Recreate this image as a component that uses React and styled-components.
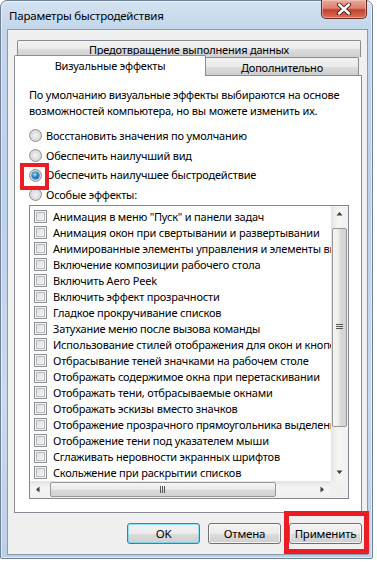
import React from "react";
import styled, { createGlobalStyle, css } from "styled-components";

const GlobalStyle = createGlobalStyle`
  html, body {
    margin: 0;
    padding: 0;
    background: #ffffff;
  }
  body {
    font-family: "Noto Sans", "DejaVu Sans", sans-serif;
    font-size: 11px;
    letter-spacing: -0.2px;
    color: #000;
  }
`;

const effects = [
  'Анимация в меню "Пуск" и панели задач',
  "Анимация окон при свертывании и развертывании",
  "Анимированные элементы управления и элементы внутри окна",
  "Включение композиции рабочего стола",
  "Включить Aero Peek",
  "Включить эффект прозрачности",
  "Гладкое прокручивание списков",
  "Затухание меню после вызова команды",
  "Использование стилей отображения для окон и кнопок",
  "Отбрасывание теней значками на рабочем столе",
  "Отображать содержимое окна при перетаскивании",
  "Отображать тени, отбрасываемые окнами",
  "Отображать эскизы вместо значков",
  "Отображение прозрачного прямоугольника выделения",
  "Отображение тени под указателем мыши",
  "Сглаживать неровности экранных шрифтов",
  "Скольжение при раскрытии списков",
];

const modes = [
  { label: "Восстановить значения по умолчанию", checked: false },
  { label: "Обеспечить наилучший вид", checked: false },
  { label: "Обеспечить наилучшее быстродействие", checked: true },
  { label: "Особые эффекты:", checked: false },
];

function Arrow({ dir }) {
  const shapes = {
    up: "M0.5 4.5 L3.5 1 L6.5 4.5 Z",
    down: "M0.5 1.5 L3.5 5 L6.5 1.5 Z",
    left: "M4.5 0.5 L1 3.5 L4.5 6.5 Z",
    right: "M1.5 0.5 L5 3.5 L1.5 6.5 Z",
  };
  return (
    <svg width="7" height="7" viewBox="0 0 7 7">
      <path d={shapes[dir]} fill="#3c3c3c" />
    </svg>
  );
}

function App() {
  return (
    <>
      <GlobalStyle />
      <Window>
        <TitleBar>
          <Title>Параметры быстродействия</Title>
          <CloseButton>
            <svg width="16" height="12" viewBox="0 0 16 12">
              <path
                d="M3 1.5 L13 10.5 M13 1.5 L3 10.5"
                stroke="#3b1510"
                strokeWidth="4.2"
                strokeLinecap="round"
              />
              <path
                d="M3 1.5 L13 10.5 M13 1.5 L3 10.5"
                stroke="#ffffff"
                strokeWidth="2.4"
                strokeLinecap="round"
              />
            </svg>
          </CloseButton>
        </TitleBar>

        <Client>
          <TabRow $first>
            <Tab $wide>Предотвращение выполнения данных</Tab>
          </TabRow>
          <TabRow>
            <Tab $active>Визуальные эффекты</Tab>
            <Tab>Дополнительно</Tab>
          </TabRow>

          <Panel>
            <Description>
              По умолчанию визуальные эффекты выбираются на основе
              <br />
              возможностей компьютера, но вы можете изменить их.
            </Description>

            <RadioGroup>
              {modes.map((m) => (
                <RadioRow key={m.label}>
                  <RadioMark $checked={m.checked} />
                  <span>{m.label}</span>
                </RadioRow>
              ))}
            </RadioGroup>

            <ListBox>
              <ListViewport>
                {effects.map((e) => (
                  <ListItem key={e}>
                    <CheckMark />
                    <span>{e}</span>
                  </ListItem>
                ))}
              </ListViewport>

              <VScroll>
                <ScrollArrow>
                  <Arrow dir="up" />
                </ScrollArrow>
                <VTrack>
                  <VThumb>
                    <svg width="7" height="6" viewBox="0 0 7 6">
                      <path d="M0 0.5 H7 M0 2.5 H7 M0 4.5 H7" stroke="#555" />
                    </svg>
                  </VThumb>
                </VTrack>
                <ScrollArrow>
                  <Arrow dir="down" />
                </ScrollArrow>
              </VScroll>

              <HScroll>
                <ScrollArrow>
                  <Arrow dir="left" />
                </ScrollArrow>
                <HTrack>
                  <HThumb>
                    <svg width="6" height="7" viewBox="0 0 6 7">
                      <path d="M0.5 0 V7 M2.5 0 V7 M4.5 0 V7" stroke="#555" />
                    </svg>
                  </HThumb>
                </HTrack>
                <ScrollArrow>
                  <Arrow dir="right" />
                </ScrollArrow>
              </HScroll>
              <Corner />
            </ListBox>
          </Panel>

          <ButtonRow>
            <Button $default>OK</Button>
            <Button>Отмена</Button>
            <Button>Применить</Button>
          </ButtonRow>
        </Client>

        <Highlight $left={19} $top={162} $w={29} $h={27} $t={4} />
        <Highlight $left={283} $top={510} $w={85} $h={43} $t={5} />
      </Window>
    </>
  );
}

const Window = styled.div`
  position: relative;
  box-sizing: border-box;
  width: 373px;
  height: 559px;
  padding: 0 4px 3px 6px;
  display: flex;
  flex-direction: column;
  border: 1px solid #6d8299;
  border-radius: 7px 7px 2px 2px;
  background: linear-gradient(
    to bottom,
    #d5e3f1 0px,
    #c3d6ea 28px,
    #bdd1e7 200px,
    #c9dbee 400px,
    #bccfe4 100%
  );
  box-shadow: inset 0 0 0 1px rgba(255, 255, 255, 0.55);
`;

const TitleBar = styled.div`
  height: 28px;
  display: flex;
  align-items: center;
  padding-left: 2px;
`;

const Title = styled.div`
  font-size: 11.5px;
  color: #000;
`;

const CloseButton = styled.div`
  margin-left: auto;
  align-self: flex-start;
  margin-top: -1px;
  margin-right: 1px;
  width: 46px;
  height: 19px;
  box-sizing: border-box;
  display: flex;
  align-items: center;
  justify-content: center;
  border: 1px solid #6a2a22;
  border-top: none;
  border-radius: 0 0 5px 5px;
  background: linear-gradient(
    to bottom,
    #e9a99c 0%,
    #d98272 45%,
    #c4412d 55%,
    #d4705c 100%
  );
  box-shadow: inset 0 0 0 1px rgba(255, 220, 210, 0.45);
`;

const Client = styled.div`
  flex: 1;
  box-sizing: border-box;
  display: flex;
  flex-direction: column;
  padding: 10px 0 0;
  background: #f0f0f0;
  border: 1px solid #8a9bb0;
`;

const TabRow = styled.div`
  display: flex;
  align-items: flex-end;
  margin: ${(p) => (p.$first ? "0 6px 0 9px" : "0 8px 0 6px")};
  position: relative;
  z-index: 1;
`;

const Tab = styled.div`
  box-sizing: border-box;
  display: flex;
  align-items: center;
  justify-content: center;
  white-space: nowrap;
  border: 1px solid #898c95;
  border-bottom: none;
  border-radius: 2px 2px 0 0;
  background: linear-gradient(to bottom, #f3f3f3 0%, #ebebeb 50%, #dddddd 51%, #cfcfcf 100%);
  height: 17px;
  ${(p) => (p.$wide ? "flex: 1;" : "")}
  ${(p) =>
    p.$active
      ? css`
          width: 192px;
          height: 21px;
          margin-top: -2px;
          margin-bottom: -1px;
          background: #ffffff;
          padding-bottom: 1px;
          position: relative;
          z-index: 2;
        `
      : ""}
  ${(p) =>
    !p.$active && !p.$wide
      ? css`
          flex: 1;
          height: 18px;
          padding-top: 2px;
          margin-left: -1px;
        `
      : ""}
`;

const Panel = styled.div`
  box-sizing: border-box;
  margin: 0 5px 0 6px;
  height: 438px;
  background: #ffffff;
  border: 1px solid #898c95;
  padding: 11px 0 0 14px;
  display: flex;
  flex-direction: column;
`;

const Description = styled.div`
  line-height: 16px;
  white-space: nowrap;
`;

const RadioGroup = styled.div`
  display: flex;
  flex-direction: column;
  margin-top: 7px;
`;

const RadioRow = styled.div`
  display: flex;
  align-items: center;
  gap: 4px;
  height: 19.7px;
  white-space: nowrap;
  span {
    line-height: 16px;
  }
`;

const RadioMark = styled.div`
  flex: none;
  box-sizing: border-box;
  width: 13px;
  height: 13px;
  border-radius: 50%;
  border: 1px solid #8e8f8f;
  background: radial-gradient(circle at 50% 50%, #f4f4f4 0%, #d6d6d6 70%, #e9e9e9 100%);
  display: flex;
  align-items: center;
  justify-content: center;
  &::after {
    content: "";
    width: 7px;
    height: 7px;
    border-radius: 50%;
    display: ${(p) => (p.$checked ? "block" : "none")};
    background: radial-gradient(circle at 40% 35%, #b9e4ff 0%, #2d8fd6 40%, #0b4a8d 100%);
    box-shadow: 0 0 0 0.5px #1b4f86;
  }
`;

const ListBox = styled.div`
  box-sizing: border-box;
  width: 320px;
  height: 294px;
  border: 1px solid #828790;
  display: grid;
  grid-template-columns: 1fr 17px;
  grid-template-rows: 275px 17px;
  background: #ffffff;
`;

const ListViewport = styled.div`
  overflow: hidden;
  padding: 3px 0 0 4px;
`;

const ListItem = styled.div`
  height: 16px;
  display: flex;
  align-items: center;
  gap: 6px;
  white-space: nowrap;
`;

const CheckMark = styled.div`
  flex: none;
  box-sizing: border-box;
  width: 13px;
  height: 13px;
  border: 1px solid #8e8f8f;
  background: linear-gradient(135deg, #dcdcdc 0%, #f2f2f2 70%, #fbfbfb 100%);
  box-shadow: inset 0 0 0 1px #f6f6f6, inset 0 0 0 2px #b6b9be;
`;

const VScroll = styled.div`
  display: flex;
  flex-direction: column;
  background: linear-gradient(to right, #e3e3e3, #f5f5f5 40%, #f0f0f0);
`;

const HScroll = styled.div`
  display: flex;
  background: linear-gradient(to bottom, #e3e3e3, #f5f5f5 40%, #f0f0f0);
`;

const ScrollArrow = styled.div`
  flex: none;
  width: 17px;
  height: 17px;
  display: flex;
  align-items: center;
  justify-content: center;
`;

const VTrack = styled.div`
  flex: 1;
  padding: 5px 1px 0;
`;

const VThumb = styled.div`
  box-sizing: border-box;
  height: 199px;
  border: 1px solid #979797;
  border-radius: 2px;
  background: linear-gradient(to right, #f6f6f6 0%, #ebebeb 45%, #dadada 55%, #d2d2d2 100%);
  display: flex;
  align-items: center;
  justify-content: center;
`;

const HTrack = styled.div`
  flex: 1;
  padding: 1px 0 1px 3px;
`;

const HThumb = styled.div`
  box-sizing: border-box;
  width: 226px;
  height: 100%;
  border: 1px solid #979797;
  border-radius: 2px;
  background: linear-gradient(to bottom, #f6f6f6 0%, #ebebeb 45%, #dadada 55%, #d2d2d2 100%);
  display: flex;
  align-items: center;
  justify-content: center;
`;

const Corner = styled.div`
  background: #f0f0f0;
`;

const ButtonRow = styled.div`
  display: flex;
  justify-content: flex-end;
  gap: 8px;
  padding: 10px 5px 0 0;
`;

const Button = styled.div`
  box-sizing: border-box;
  width: 73px;
  height: 21px;
  display: flex;
  align-items: center;
  justify-content: center;
  font-size: 11.5px;
  border: 1px solid ${(p) => (p.$default ? "#3c7fb1" : "#707070")};
  border-radius: 3px;
  background: linear-gradient(to bottom, #f2f2f2 0%, #ebebeb 50%, #dddddd 51%, #cfcfcf 100%);
  box-shadow: inset 0 0 0 1px
    ${(p) => (p.$default ? "rgba(72, 215, 251, 0.55)" : "rgba(255, 255, 255, 0.7)")};
`;

const Highlight = styled.div`
  position: absolute;
  left: ${(p) => p.$left}px;
  top: ${(p) => p.$top}px;
  width: ${(p) => p.$w}px;
  height: ${(p) => p.$h}px;
  box-sizing: border-box;
  border: ${(p) => p.$t}px solid #ec1c24;
  pointer-events: none;
  z-index: 5;
`;

export default App;
